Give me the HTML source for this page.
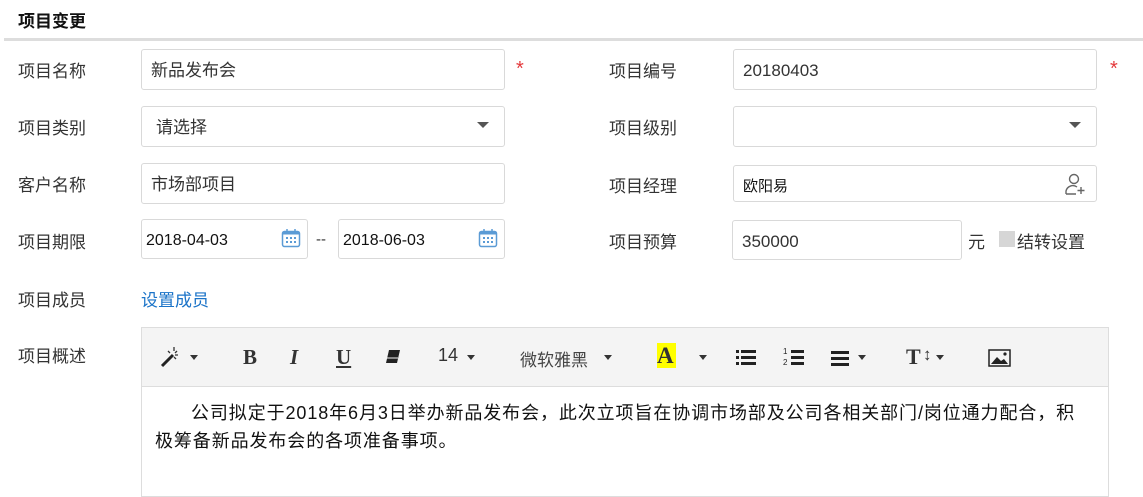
<!DOCTYPE html>
<html><head><meta charset="utf-8"><style>
body{margin:0;width:1143px;height:484px;overflow:hidden;background:#fff;font-family:"Liberation Sans","Noto Sans CJK SC",sans-serif;color:#333;position:relative}
.a{position:absolute}
.lbl{position:absolute;font-size:17px;color:#333;line-height:20px}
.in{position:absolute;border:1px solid #d9d9d9;border-radius:3px;box-sizing:border-box;font-size:17px;line-height:42px;padding-left:9px;color:#333;background:#fff}
.star{position:absolute;color:#e4393c;font-size:20px}
.caret{position:absolute;width:0;height:0;border-left:6px solid transparent;border-right:6px solid transparent;border-top:6px solid #555}
.tb{position:absolute;font-size:19px;color:#333}
.tc{position:absolute;width:0;height:0;border-left:4px solid transparent;border-right:4px solid transparent;border-top:5px solid #333}
</style></head><body>
<div class="a" style="left:18px;top:7px;font-size:17px;font-weight:bold;color:#111">项目变更</div>
<div class="a" style="left:4px;top:38px;width:1139px;height:3px;background:#ddd"></div>

<div class="lbl" style="left:18px;top:62px">项目名称</div>
<div class="in" style="left:141px;top:49px;width:364px;height:41px">新品发布会</div>
<div class="star" style="left:516px;top:58px">*</div>
<div class="lbl" style="left:609px;top:62px">项目编号</div>
<div class="in" style="left:733px;top:49px;width:364px;height:41px">20180403</div>
<div class="star" style="left:1110px;top:58px">*</div>

<div class="lbl" style="left:18px;top:119px">项目类别</div>
<div class="in" style="left:141px;top:106px;width:364px;height:41px;padding-left:14px">请选择</div>
<div class="caret" style="left:477px;top:122px"></div>
<div class="lbl" style="left:609px;top:119px">项目级别</div>
<div class="in" style="left:733px;top:106px;width:364px;height:41px"></div>
<div class="caret" style="left:1069px;top:122px"></div>

<div class="lbl" style="left:18px;top:176px">客户名称</div>
<div class="in" style="left:141px;top:163px;width:364px;height:41px">市场部项目</div>
<div class="lbl" style="left:609px;top:177px">项目经理</div>
<div class="in" style="left:733px;top:165px;width:364px;height:37px;font-size:15px;line-height:41px;color:#111">欧阳易</div>
<svg class="a" style="left:1064px;top:172px" width="24" height="24" viewBox="0 0 24 24" fill="none" stroke="#666" stroke-width="1.4"><circle cx="10" cy="7" r="4.5"/><path d="M2 22v-3a7 7 0 0 1 11-4"/><path d="M2 22h10M17 15v7M13.5 18.5h7"/></svg>

<div class="lbl" style="left:18px;top:233px">项目期限</div>
<div class="in" style="left:141px;top:219px;width:167px;height:40px;font-size:16px;padding-left:4px;color:#111">2018-04-03</div>
<div class="a" style="left:316px;top:231px;font-size:15px">--</div>
<div class="in" style="left:338px;top:219px;width:167px;height:40px;font-size:16px;padding-left:4px;color:#111">2018-06-03</div>
<svg class="a" style="left:281px;top:228px" width="20" height="20" viewBox="0 0 20 20"><rect x="1.5" y="3.5" width="17" height="15" rx="2" fill="none" stroke="#5b9bd5" stroke-width="1.5"/><rect x="1.5" y="3.5" width="17" height="3" fill="#5b9bd5"/><path d="M6 1v4M14 1v4" stroke="#5b9bd5" stroke-width="1.5"/><g fill="#5b9bd5"><rect x="5" y="9" width="2" height="2"/><rect x="9" y="9" width="2" height="2"/><rect x="13" y="9" width="2" height="2"/><rect x="5" y="13" width="2" height="2"/><rect x="9" y="13" width="2" height="2"/><rect x="13" y="13" width="2" height="2"/></g></svg>
<svg class="a" style="left:478px;top:228px" width="20" height="20" viewBox="0 0 20 20"><rect x="1.5" y="3.5" width="17" height="15" rx="2" fill="none" stroke="#5b9bd5" stroke-width="1.5"/><rect x="1.5" y="3.5" width="17" height="3" fill="#5b9bd5"/><path d="M6 1v4M14 1v4" stroke="#5b9bd5" stroke-width="1.5"/><g fill="#5b9bd5"><rect x="5" y="9" width="2" height="2"/><rect x="9" y="9" width="2" height="2"/><rect x="13" y="9" width="2" height="2"/><rect x="5" y="13" width="2" height="2"/><rect x="9" y="13" width="2" height="2"/><rect x="13" y="13" width="2" height="2"/></g></svg>
<div class="lbl" style="left:609px;top:233px">项目预算</div>
<div class="in" style="left:732px;top:220px;width:230px;height:40px">350000</div>
<div class="lbl" style="left:968px;top:233px">元</div>
<div class="a" style="left:999px;top:231px;width:16px;height:16px;background:#d6d6d6"></div>
<div class="lbl" style="left:1017px;top:233px">结转设置</div>

<div class="lbl" style="left:18px;top:291px">项目成员</div>
<div class="lbl" style="left:141px;top:291px;color:#1a73c8">设置成员</div>

<div class="lbl" style="left:18px;top:347px">项目概述</div>
<div class="a" style="left:141px;top:327px;width:968px;height:170px;border:1px solid #ddd;box-sizing:border-box"></div>
<div class="a" style="left:142px;top:328px;width:966px;height:58px;background:#f4f4f4;border-bottom:1px solid #ddd"></div>
<svg class="a" style="left:160px;top:345px" width="26" height="24" viewBox="0 0 26 24"><path d="M2 21L13 10" stroke="#222" stroke-width="3"/><path d="M14 2v4M8 6l2 2M17 6l-2 2M18 10h-3M16 14l-2-2" stroke="#333" stroke-width="1.3"/></svg>
<div class="tc" style="left:190px;top:355px"></div>
<div class="tb" style="left:243px;top:345px;font-family:'Liberation Serif',serif;font-weight:bold;font-size:21px">B</div>
<div class="tb" style="left:290px;top:345px;font-family:'Liberation Serif',serif;font-style:italic;font-weight:bold;font-size:21px">I</div>
<div class="tb" style="left:336px;top:345px;font-family:'Liberation Serif',serif;font-weight:bold;text-decoration:underline;font-size:21px">U</div>
<svg class="a" style="left:384px;top:347px" width="18" height="18" viewBox="0 0 18 18"><path d="M5 3h11l-3 13H2z" fill="#222"/><path d="M3 11h11" stroke="#f4f4f4" stroke-width="1"/></svg>
<div class="tb" style="left:438px;top:345px;font-size:18px">14</div>
<div class="tc" style="left:467px;top:355px"></div>
<div class="tb" style="left:520px;top:346px;font-size:17px;color:#444">微软雅黑</div>
<div class="tc" style="left:604px;top:355px"></div>
<div class="a" style="left:657px;top:343px;width:19px;height:25px;background:#ff0"></div>
<div class="tb" style="left:657px;top:343px;font-family:'Liberation Serif',serif;font-weight:bold;font-size:23px">A</div>
<div class="tc" style="left:699px;top:355px"></div>
<svg class="a" style="left:736px;top:349px" width="21" height="16" viewBox="0 0 21 16" fill="#222"><rect x="0" y="1" width="3" height="3"/><rect x="5" y="1" width="15" height="3"/><rect x="0" y="7" width="3" height="3"/><rect x="5" y="7" width="15" height="3"/><rect x="0" y="13" width="3" height="3"/><rect x="5" y="13" width="15" height="3"/></svg>
<svg class="a" style="left:783px;top:346px" width="22" height="20" viewBox="0 0 22 20" fill="#222"><text x="0" y="8" font-size="8" font-family="Liberation Sans">1</text><text x="0" y="19" font-size="8" font-family="Liberation Sans">2</text><rect x="8" y="4" width="13" height="3"/><rect x="8" y="10" width="13" height="3"/><rect x="8" y="16" width="13" height="3"/></svg>
<svg class="a" style="left:831px;top:350px" width="20" height="16" viewBox="0 0 20 16" fill="#222"><rect x="0" y="1" width="18" height="3"/><rect x="0" y="7" width="18" height="3"/><rect x="0" y="13" width="18" height="3"/></svg>
<div class="tc" style="left:858px;top:355px"></div>
<div class="tb" style="left:906px;top:344px;font-family:'Liberation Serif',serif;font-weight:bold;font-size:22px">T</div>
<div class="a" style="left:923px;top:345px;font-size:17px;color:#333">↕</div>
<div class="tc" style="left:936px;top:355px"></div>
<svg class="a" style="left:988px;top:349px" width="23" height="18" viewBox="0 0 23 18"><rect x="1" y="1" width="21" height="16" fill="none" stroke="#222" stroke-width="1.5"/><path d="M3 15l6-7 4 4 3-2 4 5z" fill="#222"/><circle cx="17" cy="5" r="1.6" fill="#222"/></svg>
<div class="a" style="left:155px;top:399px;width:932px;font-size:18px;line-height:28px;color:#111;text-indent:36px;letter-spacing:0.9px">公司拟定于2018年6月3日举办新品发布会，此次立项旨在协调市场部及公司各相关部门/岗位通力配合，积<br>极筹备新品发布会的各项准备事项。</div>
</body></html>
